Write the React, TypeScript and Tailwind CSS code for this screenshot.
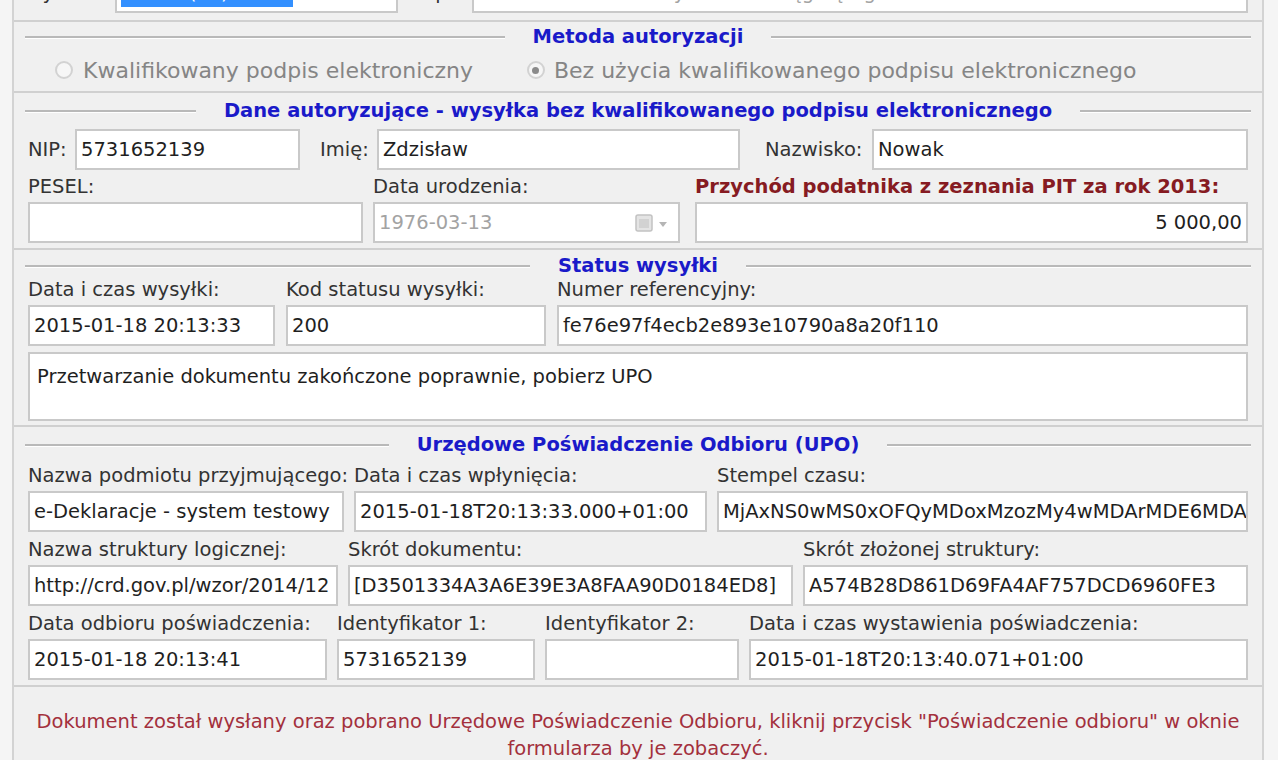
import React from 'react';

type FieldProps = {
  label?: string;
  value?: string;
  width: string;
  muted?: boolean;
  right?: boolean;
  labelClass?: string;
  children?: React.ReactNode;
};

const Input = ({
  value,
  className = '',
  muted,
  right,
  children,
}: {
  value?: string;
  className?: string;
  muted?: boolean;
  right?: boolean;
  children?: React.ReactNode;
}) => (
  <div
    className={`flex h-[41px] min-w-0 items-center overflow-hidden whitespace-nowrap border-2 border-[#c9c9c9] bg-white px-[4px] ${
      right ? 'justify-end' : ''
    } ${muted ? 'text-[#a3a3a3]' : 'text-[#1f1f1f]'} ${className}`}
  >
    {value}
    {children}
  </div>
);

const Field = ({ label, value, width, muted, right, labelClass, children }: FieldProps) => (
  <div className={`flex min-w-0 shrink-0 flex-col ${width}`}>
    <span className={`mb-[4px] whitespace-nowrap leading-[22px] ${labelClass ?? 'text-[#333]'}`}>
      {label}
    </span>
    <Input value={value} muted={muted} right={right}>
      {children}
    </Input>
  </div>
);

const SectionTitle = ({ title }: { title: string }) => (
  <div className="-mx-[3px] flex items-center gap-[28px]">
    <div className="h-[3px] flex-1 border-t-2 border-b border-t-[#b9b9b9] border-b-white" />
    <span className="whitespace-nowrap font-bold leading-[22px] text-[#1a1ac9]">{title}</span>
    <div className="h-[3px] flex-1 border-t-2 border-b border-t-[#b9b9b9] border-b-white" />
  </div>
);

const Radio = ({ checked }: { checked?: boolean }) => (
  <span className="flex size-[18px] items-center justify-center rounded-full border-2 border-[#d2d2d2] bg-[#f6f6f6]">
    {checked && <span className="size-[7px] rounded-full bg-[#8a8a8a]" />}
  </span>
);

const CalendarIcon = () => (
  <svg width="36" height="20" viewBox="0 0 36 20" className="ml-auto mr-[4px] shrink-0">
    <rect x="2" y="2" width="16" height="16" rx="2" fill="#e4e4e4" stroke="#c2c2c2" strokeWidth="1.5" />
    <rect x="5" y="6" width="10" height="9" fill="#d2d2d2" />
    <path d="M25 9 L33 9 L29 14 Z" fill="#b5b5b5" />
  </svg>
);

export default function App() {
  return (
    <div className="min-h-screen overflow-hidden bg-[#f5f5f5] pl-[12px] pr-[14px] font-['DejaVu_Sans',sans-serif] text-[19.5px]">
      <div className="border-x-2 border-[#d3d3d3] bg-[#f0f0f0]">
        {/* top fields, mostly scrolled out of view */}
        <div className="h-[20px] overflow-hidden">
          <div className="-mt-[28px] flex items-center pl-[16px] pr-[14px]">
            <span className="w-[85px] leading-[22px] text-[#333]">Symbol:</span>
            <Input className="w-[283px]">
              <span className="bg-[#3390ff] px-[2px] text-white">PIT-37 (20) v1-0E</span>
            </Input>
            <span className="ml-[22px] w-[52px] leading-[22px] text-[#333]">Opis:</span>
            <Input className="flex-1" muted value="PIT-37 Zeznanie o wysokości osiągniętego dochodu" />
          </div>
        </div>

        {/* Metoda autoryzacji */}
        <section className="border-t-2 border-[#d0d0d0] px-[14px] pb-[10px] pt-[4px]">
          <SectionTitle title="Metoda autoryzacji" />
          <div className="mt-[11px] flex h-[22px] items-center text-[22px] text-[#858585]">
            <div className="ml-[27px] flex items-center gap-[10px]">
              <Radio />
              <span>Kwalifikowany podpis elektroniczny</span>
            </div>
            <div className="ml-[54px] flex items-center gap-[9px]">
              <Radio checked />
              <span>Bez użycia kwalifikowanego podpisu elektronicznego</span>
            </div>
          </div>
        </section>

        {/* Dane autoryzujące */}
        <section className="border-t-2 border-[#d0d0d0] px-[14px] pb-[5px] pt-[7px]">
          <SectionTitle title="Dane autoryzujące - wysyłka bez kwalifikowanego podpisu elektronicznego" />
          <div className="mt-[7px] flex items-center">
            <span className="w-[47px] text-[#333]">NIP:</span>
            <Input className="w-[225px]" value="5731652139" />
            <span className="ml-[20px] w-[57px] text-[#333]">Imię:</span>
            <Input className="w-[363px]" value="Zdzisław" />
            <span className="ml-[25px] w-[107px] text-[#333]">Nazwisko:</span>
            <Input className="flex-1" value="Nowak" />
          </div>
          <div className="mt-[6px] flex gap-[10px]">
            <Field label="PESEL:" width="w-[335px]" />
            <Field label="Data urodzenia:" width="w-[307px]" value="1976-03-13" muted>
              <CalendarIcon />
            </Field>
            <Field
              label="Przychód podatnika z zeznania PIT za rok 2013:"
              labelClass="font-bold text-[#861b22]"
              width="ml-[5px] flex-1"
              value="5 000,00"
              right
            />
          </div>
        </section>

        {/* Status wysyłki */}
        <section className="border-t-2 border-[#d0d0d0] px-[14px] pb-[4px] pt-[5px]">
          <SectionTitle title="Status wysyłki" />
          <div className="mt-[2px] flex gap-[11px]">
            <Field label="Data i czas wysyłki:" width="w-[247px]" value="2015-01-18 20:13:33" />
            <Field label="Kod statusu wysyłki:" width="w-[260px]" value="200" />
            <Field label="Numer referencyjny:" width="flex-1" value="fe76e97f4ecb2e893e10790a8a20f110" />
          </div>
          <div className="mt-[6px] h-[69px] border-2 border-[#c9c9c9] bg-white px-[7px] pt-[8px] text-[#1f1f1f]">
            Przetwarzanie dokumentu zakończone poprawnie, pobierz UPO
          </div>
        </section>

        {/* UPO */}
        <section className="border-t-2 border-[#d0d0d0] px-[14px] pb-[5px] pt-[7px]">
          <SectionTitle title="Urzędowe Poświadczenie Odbioru (UPO)" />
          <div className="mt-[9px] flex flex-col gap-[7px]">
            <div className="flex gap-[10px]">
              <Field label="Nazwa podmiotu przyjmującego:" width="w-[316px]" value="e-Deklaracje - system testowy" />
              <Field label="Data i czas wpłynięcia:" width="w-[353px]" value="2015-01-18T20:13:33.000+01:00" />
              <Field label="Stempel czasu:" width="flex-1" value="MjAxNS0wMS0xOFQyMDoxMzozMy4wMDArMDE6MDA" />
            </div>
            <div className="flex gap-[10px]">
              <Field label="Nazwa struktury logicznej:" width="w-[310px]" value="http://crd.gov.pl/wzor/2014/12" />
              <Field label="Skrót dokumentu:" width="w-[445px]" value="[D3501334A3A6E39E3A8FAA90D0184ED8]" />
              <Field label="Skrót złożonej struktury:" width="flex-1" value="A574B28D861D69FA4AF757DCD6960FE3" />
            </div>
            <div className="flex gap-[10px]">
              <Field label="Data odbioru poświadczenia:" width="w-[299px]" value="2015-01-18 20:13:41" />
              <Field label="Identyfikator 1:" width="w-[198px]" value="5731652139" />
              <Field label="Identyfikator 2:" width="w-[194px]" />
              <Field label="Data i czas wystawienia poświadczenia:" width="flex-1" value="2015-01-18T20:13:40.071+01:00" />
            </div>
          </div>
        </section>

        {/* komunikat */}
        <section className="border-t-2 border-[#d0d0d0] px-[14px] pb-[20px] pt-[21px] text-center leading-[27px] text-[#a3303d]">
          <p className="whitespace-nowrap">
            Dokument został wysłany oraz pobrano Urzędowe Poświadczenie Odbioru, kliknij przycisk "Poświadczenie odbioru" w oknie
          </p>
          <p>formularza by je zobaczyć.</p>
        </section>
      </div>
    </div>
  );
}
